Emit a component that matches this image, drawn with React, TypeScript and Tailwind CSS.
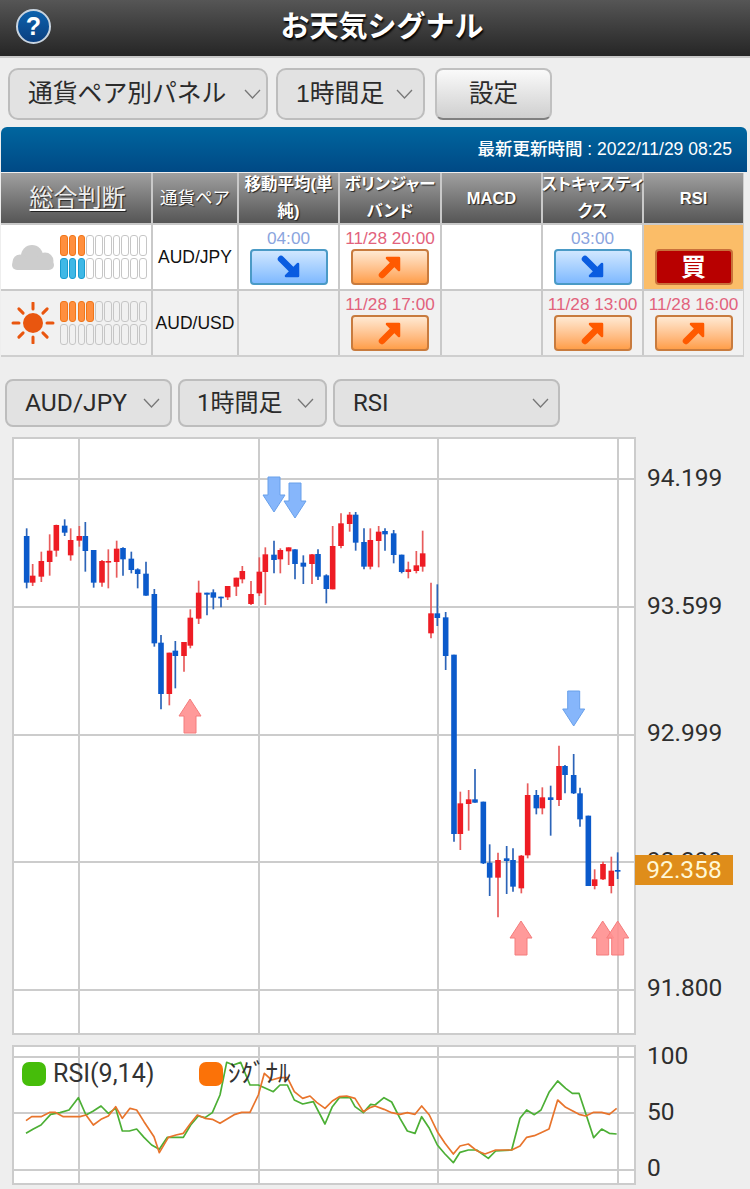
import React from "react";

type C = [number, number, number, number, number, "R" | "B"];

const z5: C[] = [
  [80,295,475,318,458,"B"],[98,402,468,437,458,"R"],[124,365,456,393,440,"R"],[149,313,437,362,396,"R"],
  [169,284,380,285,362,"R"],[194,268,318,287,308,"B"],[212,295,392,330,376,"R"],[238,288,350,318,332,"R"],
  [256,276,425,318,363,"B"],[281,360,473,360,458,"B"],[306,390,470,393,458,"R"],[325,358,475,393,397,"R"],
  [350,332,443,356,396,"R"],[369,352,437,354,388,"B"],[394,365,430,386,420,"B"],[413,415,475,418,432,"B"],
  [438,395,497,431,497,"B"],[463,477,650,492,640,"B"],[483,615,838,638,792,"B"],[508,668,826,668,792,"R"],
  [526,633,775,662,678,"B"],[552,636,725,636,678,"R"],[571,538,655,563,647,"R"],[596,452,582,488,566,"R"],
  [621,488,556,488,494,"B"],[640,478,538,487,503,"B"],
];
const z6: C[] = [
  [3,380,412,380,385,"B"],[23,348,390,348,382,"R"],[49,323,378,323,350,"R"],[67,288,340,303,328,"R"],
  [93,333,405,372,402,"R"],[118,262,378,305,370,"R"],[136,232,405,253,306,"R"],[162,212,310,254,270,"B"],
  [181,235,310,240,268,"R"],[206,232,285,232,244,"R"],[225,238,328,238,282,"B"],[250,256,342,278,290,"B"],
  [276,252,342,253,282,"R"],[294,238,330,252,320,"B"],[319,313,400,316,357,"B"],[338,168,358,228,358,"R"],
  [363,130,235,160,228,"R"],[389,126,185,134,162,"R"],[407,126,242,134,218,"B"],[432,175,298,216,290,"B"],
  [451,175,298,210,290,"R"],[476,168,292,185,213,"R"],[495,175,242,183,193,"B"],[521,180,280,190,255,"B"],
  [545,254,310,254,306,"B"],[565,275,325,298,306,"R"],[589,243,310,286,303,"R"],[608,182,305,250,290,"R"],
  [633,338,505,430,490,"R"],[652,343,468,430,444,"B"],
];
const z7: C[] = [
  [47,96,270,112,228,"B"],[72,224,785,224,762,"B"],[91,635,810,670,762,"R"],[116,630,752,658,672,"R"],
  [135,567,668,658,668,"B"],[160,665,852,665,850,"B"],[179,793,948,848,893,"B"],[204,818,1012,840,893,"R"],
  [230,798,942,835,843,"B"],[249,805,935,840,920,"B"],[274,825,940,827,925,"R"],[293,610,835,645,826,"R"],
  [319,630,703,645,685,"B"],[337,622,703,652,685,"R"],[362,617,767,652,660,"B"],[387,497,678,558,660,"R"],
  [405,555,640,558,585,"B"],[431,522,642,585,640,"B"],[450,623,740,640,718,"B"],[475,707,918,707,918,"B"],
  [494,868,928,898,918,"R"],[519,845,900,852,898,"R"],[544,830,940,872,918,"R"],[563,817,897,870,875,"B"],
];

const place = (list: C[], ox: number, oy: number) =>
  list.map(([x, wt, wb, bt, bb, c]) => ({
    x: ox + x / 3, wt: oy + wt / 3, wb: oy + wb / 3, bt: oy + bt / 3, bb: oy + bb / 3, c,
  }));
const candles = [...place(z5, 0, 430), ...place(z6, 220, 470), ...place(z7, 430, 580)];

const green8 = [78,310,100,297,123,285,152,253,180,248,207,240,235,203,258,255,280,243,303,228,325,250,347,235,367,303,388,303,410,297,432,322,455,345,478,358,502,322,528,322,550,322,572,285,595,258,615,263,637,248,660,195,680,97,700,105,722,97,750,165,775,165,820,185,840,165,862,165,883,210,908,222,940,215,975,282,997,230,1018,203,1050,203,1065,230,1090,248,1112,223,1125,225];
const green9 = [27,203,50,216,75,265,97,303,120,310,140,260,163,295,187,345,210,372,235,398,255,367,280,360,305,360,340,385,362,363,410,360,435,265,455,240,478,254,498,240,522,187,548,153,572,175,592,190,612,190,632,250,656,323,680,297,703,310,725,312];
const orange8 = [78,272,95,260,123,260,150,247,165,247,190,260,240,260,258,255,280,285,303,268,325,258,347,230,367,265,390,235,410,240,432,275,462,320,478,368,505,322,528,315,550,310,572,280,592,255,615,265,637,268,660,280,680,268,705,253,725,247,750,247,775,195,793,130,815,150,840,143,862,143,883,185,908,205,930,198,950,217,975,235,997,213,1018,200,1040,198,1065,205,1090,245,1112,232,1125,228];
const orange9 = [27,238,50,248,75,253,97,248,120,253,140,228,163,255,187,305,210,340,235,372,255,348,280,342,305,362,330,372,362,360,410,360,435,348,455,322,478,317,498,308,522,297,548,210,572,232,592,242,612,253,632,258,656,247,680,247,703,253,725,235];

const toPts = (a: number[], b: number[]) => {
  const out: string[] = [];
  for (let i = 0; i < a.length; i += 2) out.push(`${a[i] / 3},${1030 + a[i + 1] / 3}`);
  for (let i = 0; i < b.length; i += 2) out.push(`${375 + b[i] / 3},${1030 + b[i + 1] / 3}`);
  return out.join(" ");
};

const Chevron = () => (
  <svg width="17" height="10" viewBox="0 0 17 10" fill="none" stroke="#777" strokeWidth="1.3">
    <path d="M1 1l7.5 8L16 1" />
  </svg>
);

const Select = ({ label, cls, text }: { label: string; cls: string; text: string }) => (
  <div className={`flex items-center justify-between border-2 border-[#bdbdbd] bg-[#e2e2e2] text-[#2b2b2b] ${cls}`}>
    <span className={text}>{label}</span>
    <Chevron />
  </div>
);

const Arrow = ({ dir }: { dir: "down" | "up" }) => (
  <svg width="24" height="24" viewBox="0 0 24 24">
    <g transform={dir === "up" ? "translate(0,24) scale(1,-1)" : undefined}>
      <path d="M4 4L16 16" stroke={dir === "up" ? "#ff5a00" : "#0a5ce0"} strokeWidth="6.5" strokeLinecap="round" />
      <path d="M21 9V21H9Z" fill={dir === "up" ? "#ff5a00" : "#0a5ce0"} stroke={dir === "up" ? "#ff5a00" : "#0a5ce0"} strokeWidth="2.5" strokeLinejoin="round" />
    </g>
  </svg>
);

const Signal = ({ time, kind, bg }: { time?: string; kind: "down" | "up" | "buy"; bg: string }) => (
  <div className={`flex flex-col items-center justify-end pb-[4px] ${bg}`}>
    <div className={`h-[22px] text-[17.2px] leading-[22px] whitespace-nowrap ${kind === "down" ? "text-[#8aa4de]" : "text-[#e2627c]"}`}>{time}</div>
    {kind === "down" && (
      <div className="flex h-[36px] w-[78px] items-center justify-center rounded-[4px] border-2 border-[#4a9ac6] bg-gradient-to-b from-[#d0e7ff] to-[#7fb9ff]">
        <Arrow dir="down" />
      </div>
    )}
    {kind === "up" && (
      <div className="flex h-[36px] w-[78px] items-center justify-center rounded-[4px] border-2 border-[#c87b3e] bg-gradient-to-b from-[#ffe9d2] to-[#ff9e48]">
        <Arrow dir="up" />
      </div>
    )}
    {kind === "buy" && (
      <div className="flex h-[36px] w-[78px] items-center justify-center rounded-[4px] border-2 border-[#c9703a] bg-[#b80000] text-[25px] leading-none font-bold text-white">買</div>
    )}
  </div>
);

const Empty = ({ bg }: { bg: string }) => <div className={bg} />;

const Meter = ({ n, cls }: { n: number; cls: string }) => (
  <div className="flex gap-[1.2px]">
    {Array.from({ length: 10 }, (_, i) => (
      <div key={i} className={`h-[21px] w-[7.6px] rounded-[3px] border-[1.5px] ${i < n ? cls : "border-[#c6c6c6] bg-transparent"}`} />
    ))}
  </div>
);

const orangeP = "border-[#f0761a] bg-[#ff8f3e]";
const blueP = "border-[#1a9ccf] bg-[#3fb8e6]";

const Judge = ({ icon, a, b, bg }: { icon: React.ReactNode; a: number; b: number; bg: string }) => (
  <div className={`flex items-center pl-[5px] ${bg}`}>
    <div className="flex w-[54px] justify-center">{icon}</div>
    <div className="flex flex-col gap-[2px]">
      <Meter n={a} cls={orangeP} />
      <Meter n={b} cls={blueP} />
    </div>
  </div>
);

const Cloud = () => (
  <svg width="44" height="28" viewBox="0 0 44 28" fill="#cdcdcd">
    <circle cx="21" cy="13" r="11" />
    <circle cx="9" cy="19" r="7.5" />
    <circle cx="34" cy="18" r="8.5" />
    <rect x="1" y="17" width="42" height="10" rx="5" />
  </svg>
);

const Sun = () => (
  <svg width="44" height="42" viewBox="-22 -21 44 42">
    <circle r="10" fill="#e9560f" />
    <g stroke="#e9560f" strokeWidth="3" strokeLinecap="round">
      {[0, 45, 90, 135, 180, 225, 270, 315].map((d) => (
        <line key={d} x1="14" y1="0" x2="20" y2="0" transform={`rotate(${d})`} />
      ))}
    </g>
  </svg>
);

const headCls = "flex items-center justify-center bg-gradient-to-b from-[#a0a0a0] to-[#565656] text-center text-white [text-shadow:1px_1px_1px_#222]";
const Th = ({ children }: { children: React.ReactNode }) => (
  <div className={`${headCls} whitespace-nowrap text-[16.5px] leading-[27px] font-bold [font-feature-settings:'palt']`}>{children}</div>
);

const UpMark = ({ x, y }: { x: number; y: number }) => (
  <path
    d={`M${x} ${y}L${x + 11} ${y + 17}H${x + 6}V${y + 34}H${x - 6}V${y + 17}H${x - 11}Z`}
    fill="#ff8f8f"
    fillOpacity="0.9"
    stroke="#f47c7c"
    strokeWidth="1"
  />
);
const DownMark = ({ x, y }: { x: number; y: number }) => (
  <path
    d={`M${x} ${y + 35}L${x + 11} ${y + 18}H${x + 6}V${y}H${x - 6}V${y + 18}H${x - 11}Z`}
    fill="#7fb2fb"
    fillOpacity="0.95"
    stroke="#69a0ea"
    strokeWidth="1"
  />
);

const Grid = ({ ys, y0, y1 }: { ys: number[]; y0: number; y1: number }) => (
  <g stroke="#cccccc" strokeWidth="2">
    {ys.map((y) => (
      <line key={y} x1="12" x2="636" y1={y} y2={y} />
    ))}
    {[79, 259, 438, 618].map((x) => (
      <line key={x} x1={x} x2={x} y1={y0} y2={y1} />
    ))}
  </g>
);

const axisText = "font-['Roboto','Liberation_Sans',sans-serif] text-[24.5px] text-[#2e2e2e]";

export default function App() {
  return (
    <div className="h-[1189px] w-[750px] overflow-hidden bg-[#eeeeee] font-['Liberation_Sans','Noto_Sans_CJK_JP',sans-serif]">
      <header className="relative flex h-[58px] items-center justify-center border-b-2 border-[#c9c9c9] bg-gradient-to-b from-[#565656] to-[#262626]">
        <div className="absolute top-[9px] left-[16px] flex h-[35px] w-[35px] items-center justify-center rounded-full border-2 border-[#c8d4e0] bg-gradient-to-b from-[#0d62ad] to-[#0a3f80] text-[25px] leading-none font-bold text-white">?</div>
        <h1 className="ml-[14px] text-[29px] font-bold text-white [text-shadow:1px_2px_2px_#000]">お天気シグナル</h1>
      </header>

      <div className="flex items-stretch gap-[8px] pt-[10px] pl-[8px]">
        <Select label="通貨ペア別パネル" cls="h-[52px] w-[260px] rounded-[10px] pr-[5px] pl-[18px]" text="text-[24.8px]" />
        <Select label="1時間足" cls="h-[52px] w-[149px] rounded-[10px] pr-[10px] pl-[18px]" text="text-[24.8px]" />
        <button className="ml-[2px] flex h-[52px] w-[117px] items-center justify-center rounded-[8px] border-2 border-[#c0c0c0] border-b-[#808080] bg-gradient-to-b from-[#fafafa] to-[#cfcfcf] text-[24.5px] text-[#2b2b2b]">設定</button>
      </div>

      <section className="mt-[7px] ml-[1px] w-[746px]">
        <div className="flex h-[45px] items-center justify-end rounded-t-[6px] bg-gradient-to-b from-[#00669f] to-[#004985] pr-[15px] text-[17.5px] font-medium text-white">
          最新更新時間 : 2022/11/29 08:25
        </div>
        <div className="mt-[1px] grid w-[743px] grid-cols-[150px_84px_99px_100px_99px_99px_99px] grid-rows-[50px_64px_64px] gap-[2px] border-r-2 border-b-2 border-[#cfcfcf] bg-[#c9c9c9]">
          <div className={`${headCls} text-[24px] font-normal underline underline-offset-[3px]`}>
            <span className="ml-[3px] text-[#eeeeee]">総合判断</span>
          </div>
          <div className={`${headCls} text-[17.5px]`}>通貨ペア</div>
          <Th>移動平均(単<br />純)</Th>
          <Th>ボリンジャー<br />バンド</Th>
          <Th>MACD</Th>
          <Th>ストキャスティ<br />クス</Th>
          <Th>RSI</Th>

          <Judge icon={<Cloud />} a={3} b={3} bg="bg-white" />
          <div className="flex items-center justify-center bg-white text-[17.5px] text-[#111]">AUD/JPY</div>
          <Signal time="04:00" kind="down" bg="bg-white" />
          <Signal time="11/28 20:00" kind="up" bg="bg-white" />
          <Empty bg="bg-white" />
          <Signal time="03:00" kind="down" bg="bg-white" />
          <Signal kind="buy" bg="bg-[#fbbd68]" />

          <Judge icon={<Sun />} a={4} b={0} bg="bg-[#f1f1f1]" />
          <div className="flex items-center justify-center bg-[#f1f1f1] text-[17.5px] text-[#111]">AUD/USD</div>
          <Empty bg="bg-[#f1f1f1]" />
          <Signal time="11/28 17:00" kind="up" bg="bg-[#f1f1f1]" />
          <Empty bg="bg-[#f1f1f1]" />
          <Signal time="11/28 13:00" kind="up" bg="bg-[#f1f1f1]" />
          <Signal time="11/28 16:00" kind="up" bg="bg-[#f1f1f1]" />
        </div>
      </section>

      <div className="mt-[22px] flex gap-[6px] pl-[5px] font-['Roboto','Noto_Sans_CJK_JP',sans-serif]">
        <Select label="AUD/JPY" cls="h-[48px] w-[167px] rounded-[8px] pr-[10px] pl-[18px]" text="text-[24.6px]" />
        <Select label="1時間足" cls="h-[48px] w-[149px] rounded-[8px] pr-[11px] pl-[17px]" text="text-[24px]" />
        <Select label="RSI" cls="h-[48px] w-[227px] rounded-[8px] pr-[9px] pl-[18px]" text="text-[24px]" />
      </div>

      <div className="mt-[10px] flex pl-[12px]">
        <div className="h-[598px] w-[624px] border-2 border-[#cccccc] bg-white">
          <svg className="block" width="620" height="594" viewBox="14 439 620 594">
            <Grid ys={[479, 607, 735, 862, 990]} y0={437} y1={1035} />
            {candles.map((k, i) => (
              <g key={i}>
                <line x1={k.x} x2={k.x} y1={k.wt} y2={k.wb} stroke={k.c === "R" ? "#e85c5c" : "#2c64b8"} strokeWidth="1.7" />
                <rect x={k.x - 2.8} y={k.bt} width="5.6" height={Math.max(k.bb - k.bt, 1.6)} fill={k.c === "R" ? "#ee1c24" : "#0b5acb"} />
              </g>
            ))}
            <UpMark x={190} y={699} />
            <UpMark x={521} y={921} />
            <UpMark x={602.7} y={921} />
            <UpMark x={617.7} y={921} />
            <DownMark x={274} y={477} />
            <DownMark x={295} y={483} />
            <DownMark x={573.7} y={691} />
          </svg>
        </div>
        <div className={`relative -mt-[22px] h-[620px] pl-[11px] ${axisText}`}>
          {["94.199", "93.599", "92.999", "92.399", "91.800"].map((v) => (
            <div key={v} className="flex h-[127.5px] items-center">{v}</div>
          ))}
          <div className="absolute top-[440px] left-[-1px] flex h-[30px] w-[98px] items-center justify-center bg-[#df8d1a] text-[#fff8d6]">92.358</div>
        </div>
      </div>

      <div className="mt-[10px] flex pl-[12px]">
        <div className="relative h-[140px] w-[624px] border-2 border-[#cccccc] bg-white">
          <svg className="block" width="620" height="136" viewBox="14 1047 620 136">
            <Grid ys={[1057, 1113, 1170]} y0={1045} y1={1185} />
            <polyline points={toPts(green8, green9)} fill="none" stroke="#4caf35" strokeWidth="1.7" strokeLinejoin="round" />
            <polyline points={toPts(orange8, orange9)} fill="none" stroke="#e8742c" strokeWidth="1.7" strokeLinejoin="round" />
          </svg>
          <div className="absolute top-[15px] left-[8px] flex items-center gap-[7px] font-['Roboto','Noto_Sans_CJK_JP',sans-serif] text-[#333]">
            <span className="h-[24px] w-[24px] rounded-[7px] bg-[#46bd0a]" />
            <span className="w-[139px] text-[25px] leading-[24px]">RSI(9,14)</span>
            <span className="h-[24px] w-[24px] rounded-[7px] bg-[#fb7208]" />
            <span className="ml-[-2px] text-[25px] leading-[24px]">ｼｸﾞﾅﾙ</span>
          </div>
        </div>
        <div className={`-mt-[17px] pl-[11px] ${axisText}`}>
          {["100", "50", "0"].map((v) => (
            <div key={v} className="flex h-[56px] items-center">{v}</div>
          ))}
        </div>
      </div>
    </div>
  );
}
